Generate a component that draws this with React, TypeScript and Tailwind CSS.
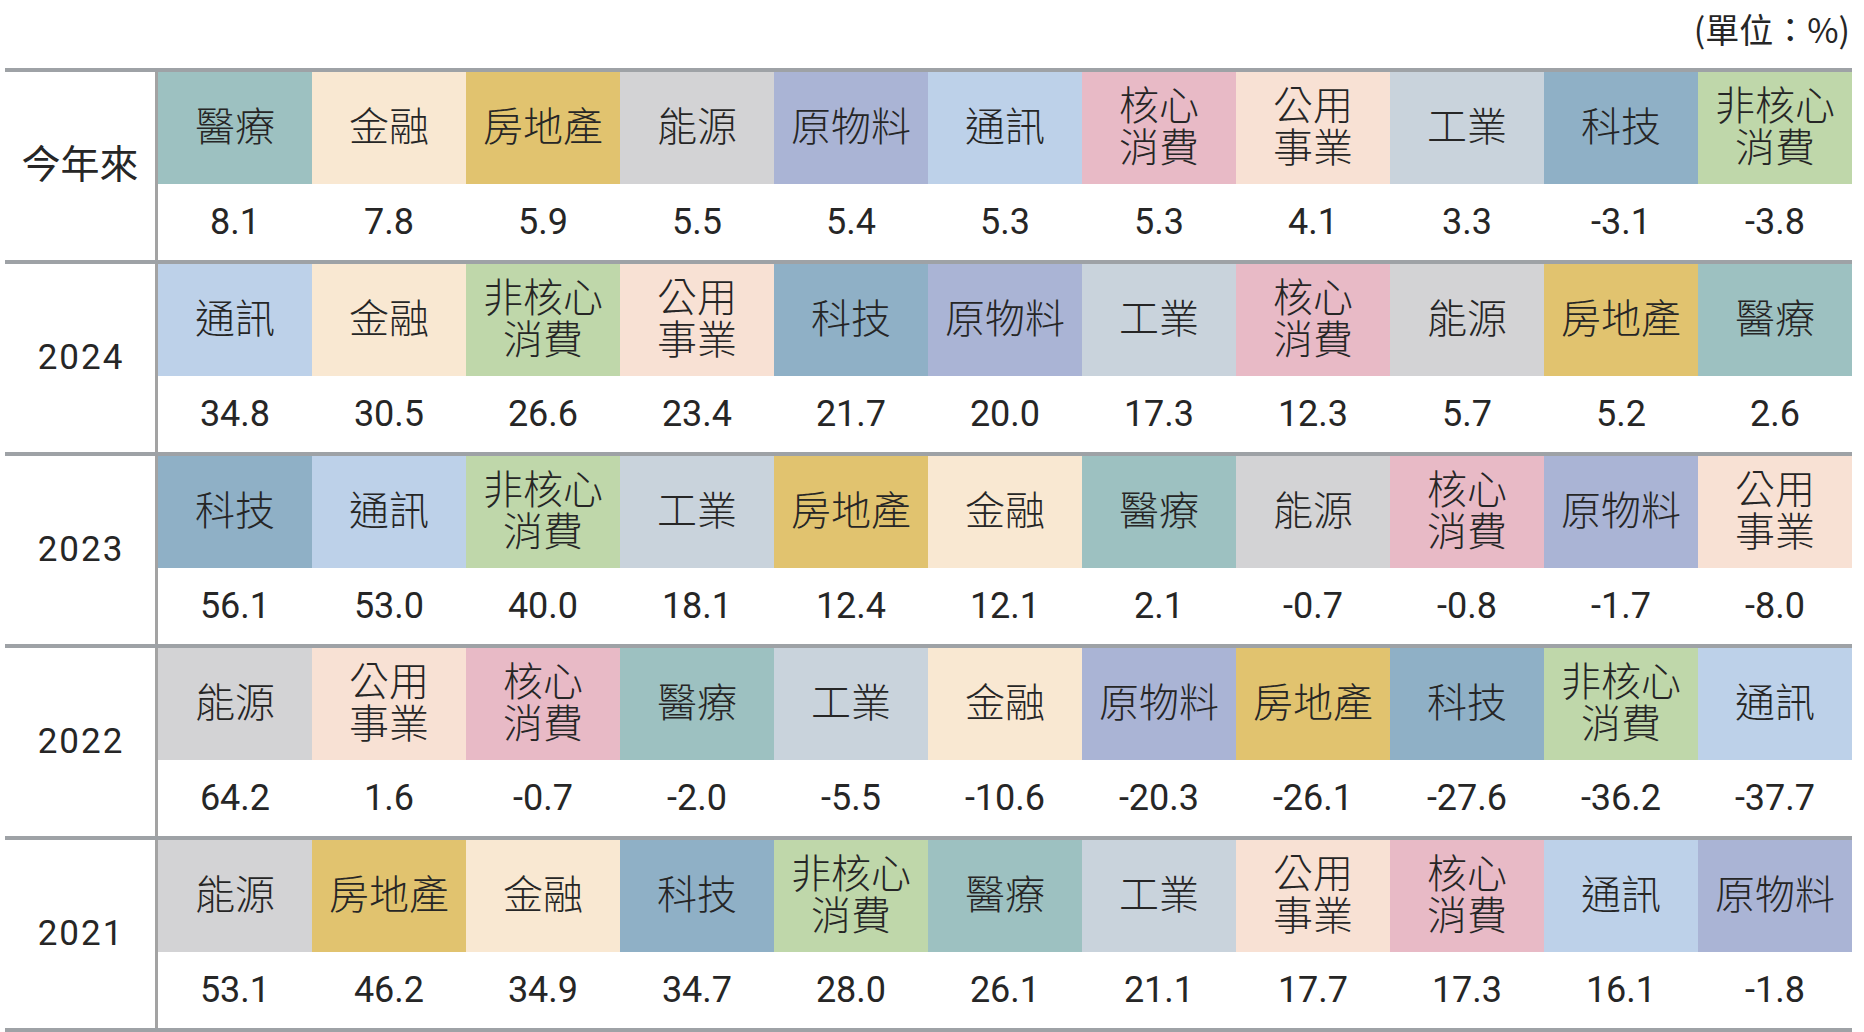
import React from 'react'

type Sector =
  | '醫療'
  | '金融'
  | '房地產'
  | '能源'
  | '原物料'
  | '通訊'
  | '核心消費'
  | '公用事業'
  | '工業'
  | '科技'
  | '非核心消費'

// full class names so tailwind picks them up
const sectorStyle: Record<Sector, { bg: string; lines: string[] }> = {
  醫療: { bg: 'bg-[#9dc1c1]', lines: ['醫療'] },
  金融: { bg: 'bg-[#f9e8d2]', lines: ['金融'] },
  房地產: { bg: 'bg-[#e1c36f]', lines: ['房地產'] },
  能源: { bg: 'bg-[#d3d3d5]', lines: ['能源'] },
  原物料: { bg: 'bg-[#aab4d5]', lines: ['原物料'] },
  通訊: { bg: 'bg-[#bdd1e9]', lines: ['通訊'] },
  核心消費: { bg: 'bg-[#e8bac6]', lines: ['核心', '消費'] },
  公用事業: { bg: 'bg-[#f8e1d4]', lines: ['公用', '事業'] },
  工業: { bg: 'bg-[#c9d3dc]', lines: ['工業'] },
  科技: { bg: 'bg-[#8fb0c6]', lines: ['科技'] },
  非核心消費: { bg: 'bg-[#bfd7aa]', lines: ['非核心', '消費'] }
}

interface Row {
  label: string
  items: [Sector, string][]
}

const rows: Row[] = [
  {
    label: '今年來',
    items: [
      ['醫療', '8.1'], ['金融', '7.8'], ['房地產', '5.9'], ['能源', '5.5'],
      ['原物料', '5.4'], ['通訊', '5.3'], ['核心消費', '5.3'], ['公用事業', '4.1'],
      ['工業', '3.3'], ['科技', '-3.1'], ['非核心消費', '-3.8']
    ]
  },
  {
    label: '2024',
    items: [
      ['通訊', '34.8'], ['金融', '30.5'], ['非核心消費', '26.6'], ['公用事業', '23.4'],
      ['科技', '21.7'], ['原物料', '20.0'], ['工業', '17.3'], ['核心消費', '12.3'],
      ['能源', '5.7'], ['房地產', '5.2'], ['醫療', '2.6']
    ]
  },
  {
    label: '2023',
    items: [
      ['科技', '56.1'], ['通訊', '53.0'], ['非核心消費', '40.0'], ['工業', '18.1'],
      ['房地產', '12.4'], ['金融', '12.1'], ['醫療', '2.1'], ['能源', '-0.7'],
      ['核心消費', '-0.8'], ['原物料', '-1.7'], ['公用事業', '-8.0']
    ]
  },
  {
    label: '2022',
    items: [
      ['能源', '64.2'], ['公用事業', '1.6'], ['核心消費', '-0.7'], ['醫療', '-2.0'],
      ['工業', '-5.5'], ['金融', '-10.6'], ['原物料', '-20.3'], ['房地產', '-26.1'],
      ['科技', '-27.6'], ['非核心消費', '-36.2'], ['通訊', '-37.7']
    ]
  },
  {
    label: '2021',
    items: [
      ['能源', '53.1'], ['房地產', '46.2'], ['金融', '34.9'], ['科技', '34.7'],
      ['非核心消費', '28.0'], ['醫療', '26.1'], ['工業', '21.1'], ['公用事業', '17.7'],
      ['核心消費', '17.3'], ['通訊', '16.1'], ['原物料', '-1.8']
    ]
  }
]

const font = "font-['Roboto','Noto_Sans_CJK_TC',sans-serif]"
const cjk = "font-['Noto_Sans_CJK_TC',sans-serif]"

const App: React.FC = () => {
  return (
    <div className={`w-[1864px] h-[1032px] bg-white text-[#262626] overflow-hidden ${font}`}>
      <div className="h-[68px] flex justify-end pr-[14px] pt-[8px]">
        <span className={`text-[34px] leading-[42px] ${cjk}`}>(單位：%)</span>
      </div>
      <div className="ml-[5px] w-[1847px] border-t-4 border-[#9ea2a6]">
        {rows.map(row => (
          <div key={row.label} className="flex h-[192px] border-b-4 border-[#9ea2a6]">
            <div
              className={`w-[153px] flex items-center justify-center border-r-[3px] border-[#a3a3a3] ${
                row.label === '今年來'
                  ? `text-[39px] pb-[10px] ${cjk}`
                  : 'text-[35px] tracking-[2px] pl-[2px]'
              }`}
            >
              {row.label}
            </div>
            <div className="flex-1 flex">
              {row.items.map(([sector, value]) => {
                const style = sectorStyle[sector]
                return (
                  <div key={sector} className="flex-1 flex flex-col">
                    <div
                      className={`h-[112px] flex items-center justify-center pb-[9px] text-[40px] leading-[42px] font-light text-center ${cjk} ${style.bg}`}
                    >
                      <p>
                        {style.lines.map((line, i) => (
                          <React.Fragment key={line}>
                            {i > 0 && <br />}
                            {line}
                          </React.Fragment>
                        ))}
                      </p>
                    </div>
                    <div className="flex-1 flex items-center justify-center text-[36px]">
                      {value}
                    </div>
                  </div>
                )
              })}
            </div>
          </div>
        ))}
      </div>
    </div>
  )
}

export default App
